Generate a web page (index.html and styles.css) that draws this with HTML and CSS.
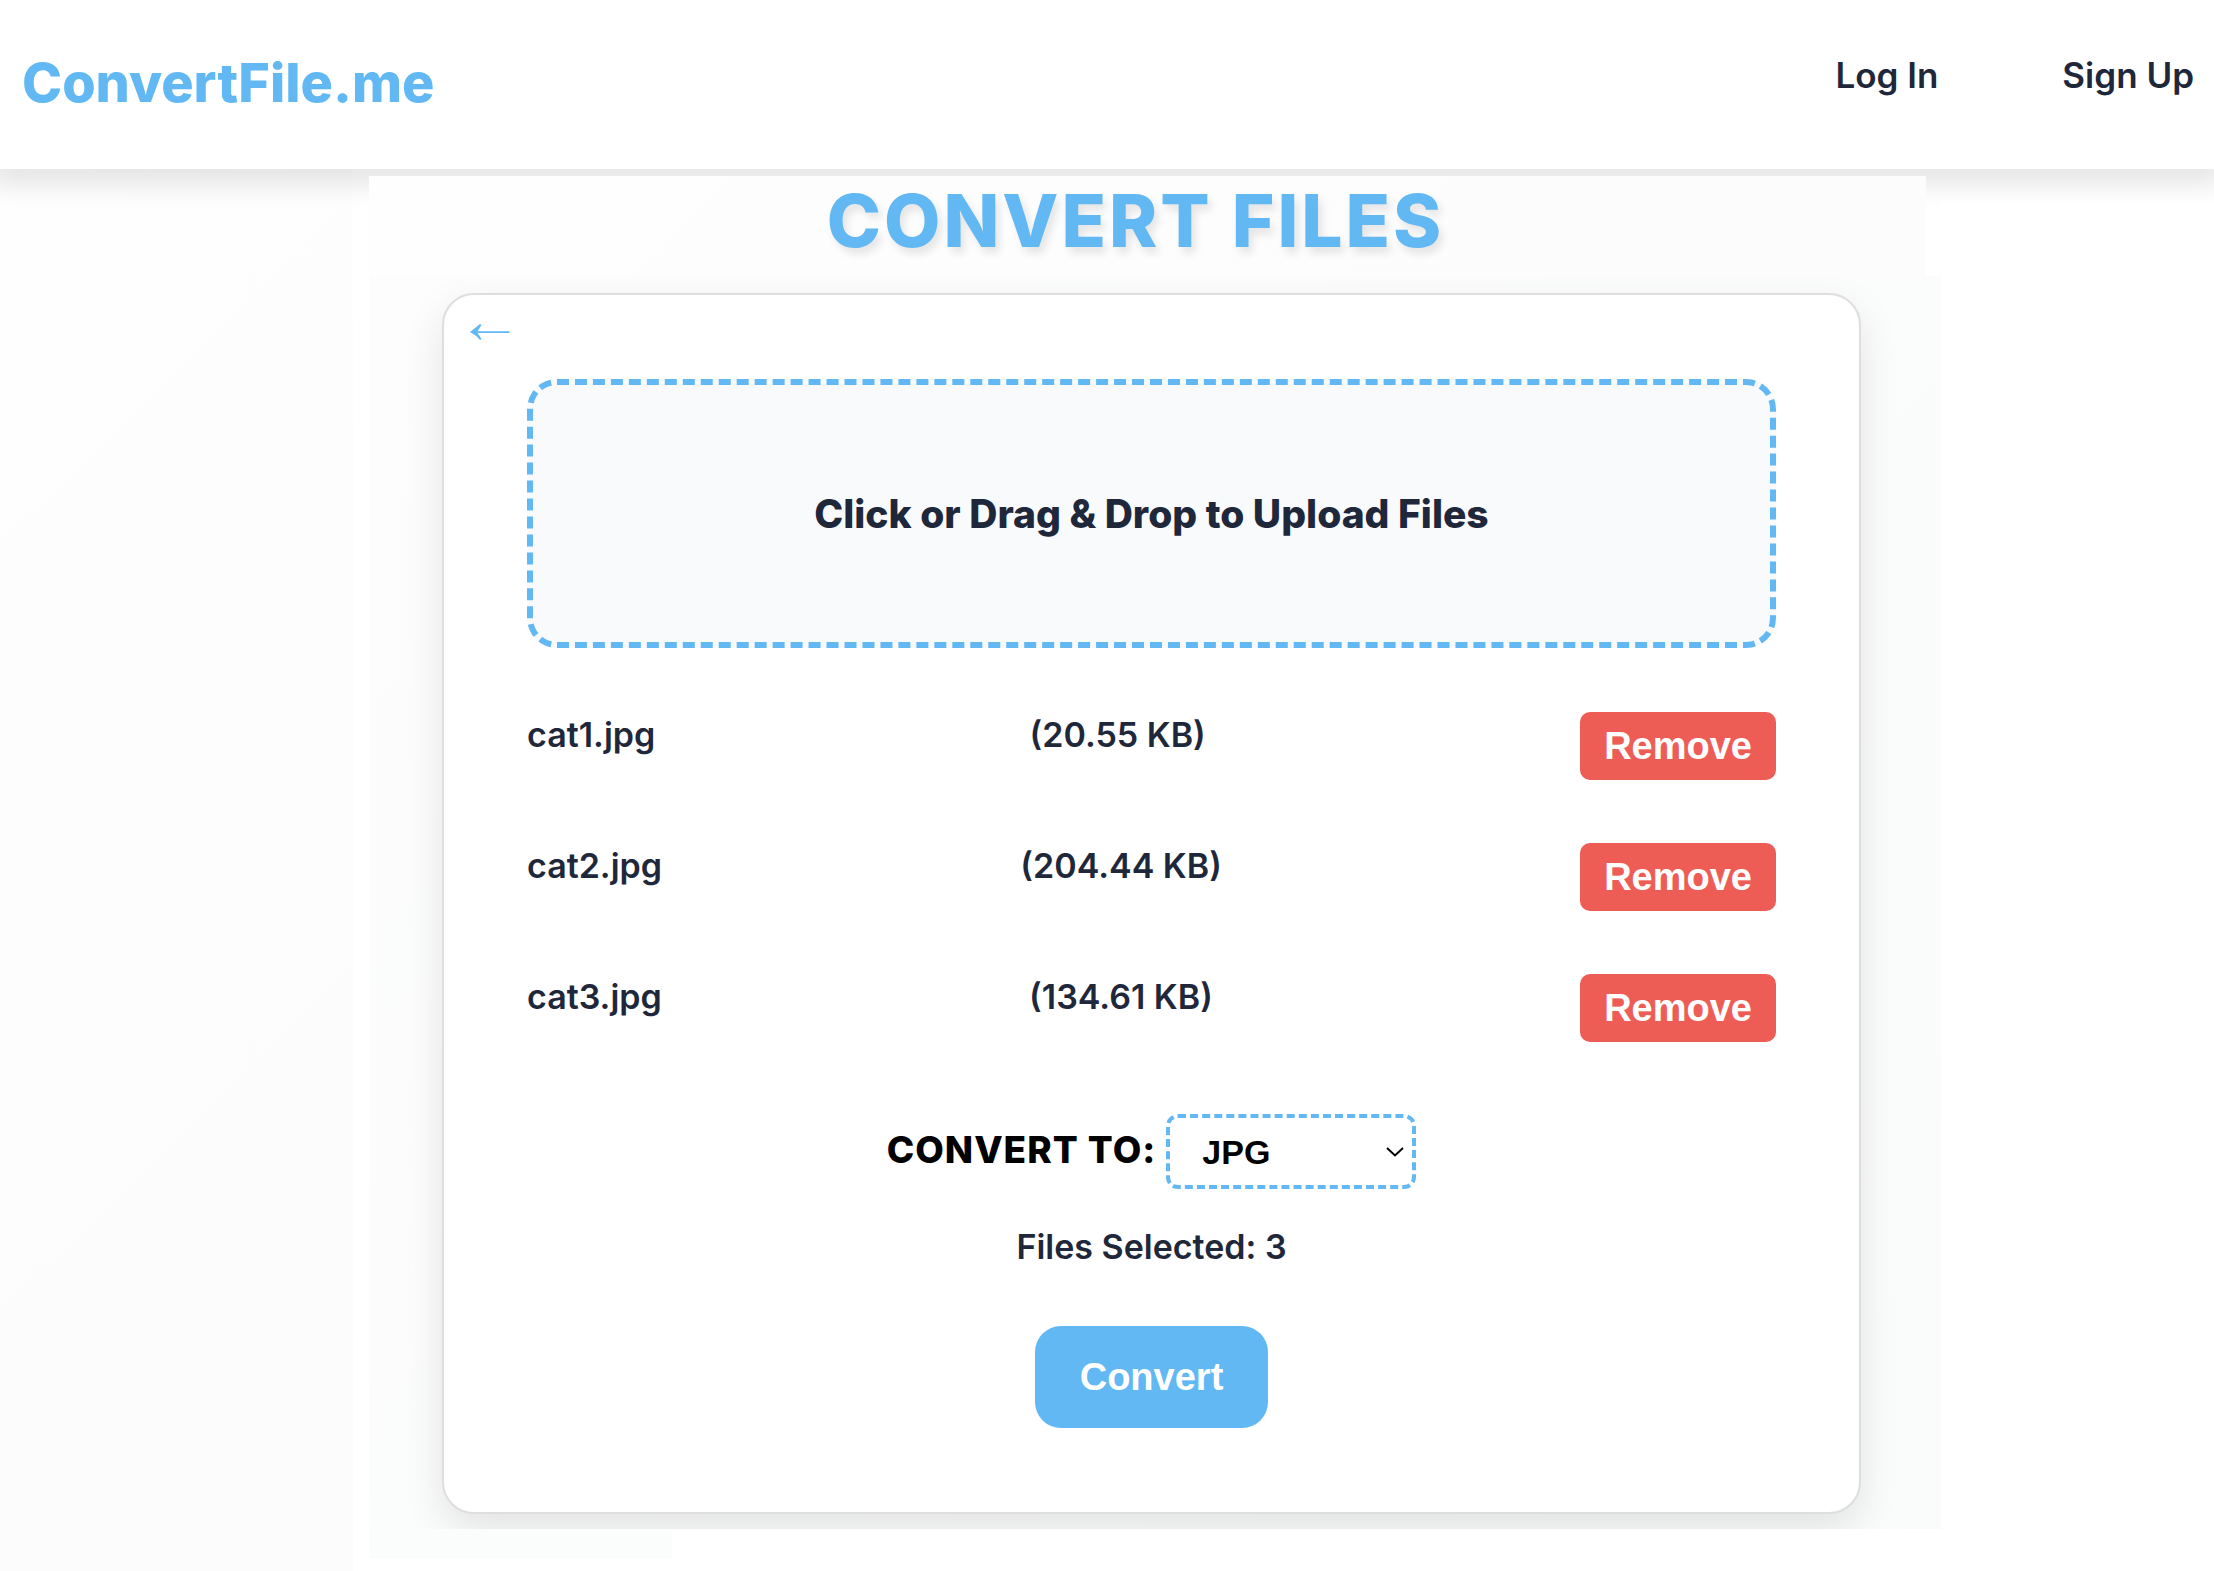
FILE: index.html
```html
<!DOCTYPE html>
<html lang="en">
<head>
  <meta charset="utf-8">
  <meta name="viewport" content="width=device-width, initial-scale=1">
  <title>ConvertFile.me</title>
  <link rel="stylesheet" href="styles.css">
</head>
<body>
  <header class="site-header">
    <a class="logo" href="#">ConvertFile.me</a>
    <nav class="nav">
      <a class="nav-link" href="#">Log In</a>
      <a class="nav-link" href="#">Sign Up</a>
    </nav>
  </header>
  <div class="layout">
    <div class="side side-left"></div>
    <main class="panel">
      <h1 class="title">CONVERT FILES</h1>
      <div class="stage">
        <form class="card">
          <a class="back" href="#" aria-label="Back">
            <svg width="40" height="18" viewBox="0 0 40 18" aria-hidden="true">
              <path d="M0 9 L10 1 L11.500 2 Q9 6 7.500 8.200 H39.500 V10 H7.500 Q9 12 11.500 16 L10 17 Q6 12 0 9 Z" fill="currentColor"/>
            </svg>
          </a>
          <label class="dropzone">
            <input class="file-input" type="file" multiple>
            <span>Click or Drag &amp; Drop to Upload Files</span>
          </label>
          <ul class="files">
            <li class="file"><span>cat1.jpg</span><span>(20.55 KB)</span><button class="remove" type="button">Remove</button></li>
            <li class="file"><span>cat2.jpg</span><span>(204.44 KB)</span><button class="remove" type="button">Remove</button></li>
            <li class="file"><span>cat3.jpg</span><span>(134.61 KB)</span><button class="remove" type="button">Remove</button></li>
          </ul>
          <div class="format">
            <label class="format-label" for="format">CONVERT TO:</label>
            <div class="select-wrap">
              <select class="select" id="format">
                <option>JPG</option>
                <option>PNG</option>
                <option>WEBP</option>
              </select>
              <svg class="chevron" width="18" height="10" viewBox="0 0 18 10" aria-hidden="true">
                <path d="M1 1 L9 8.500 L17 1" fill="none" stroke="#000" stroke-width="2"/>
              </svg>
            </div>
          </div>
          <p class="count">Files Selected: 3</p>
          <button class="convert" type="submit">Convert</button>
        </form>
      </div>
      <div class="panel-foot"></div>
    </main>
    <div class="side side-right"></div>
  </div>
</body>
</html>
```

FILE: styles.css
```css
:root {
  --blue: #62b8f3;
  --ink: #1f283b;
  --red: #ee5c56;
}

* {
  box-sizing: border-box;
}

body {
  margin: 0;
  min-height: 100vh;
  display: flex;
  flex-direction: column;
  background: #fff;
  color: var(--ink);
  font-family: Inter, sans-serif;
}

a {
  text-decoration: none;
}

.site-header {
  position: relative;
  z-index: 1;
  display: flex;
  justify-content: space-between;
  padding: 46px 20px 50px 22px;
  background: #fff;
  box-shadow: 0 8px 24px 8px rgba(0, 0, 0, 0.1);
}

.logo {
  color: var(--blue);
  font-size: 54px;
  font-weight: 800;
  line-height: 73px;
}

.nav {
  display: flex;
  gap: 124px;
}

.nav-link {
  color: var(--ink);
  font-size: 35px;
  font-weight: 600;
  line-height: 58px;
}

.layout {
  flex: 1;
  display: grid;
  grid-template-columns: 353fr 1588fr 273fr;
}

.side-left {
  background: linear-gradient(135deg, #fefefe, #fcfcfc);
}

.side-right {
  position: relative;
  z-index: 2;
  margin-top: 32px;
  background: #fff;
}

.panel {
  position: relative;
  z-index: 2;
  margin: 7px 0 0 16px;
}

.title {
  margin: 0 15px 0 0;
  padding-right: 24px;
  background: linear-gradient(135deg, #fefefe, #fcfcfc);
  color: var(--blue);
  font-size: 73px;
  font-weight: 800;
  line-height: 90px;
  height: 100px;
  letter-spacing: 3px;
  text-align: center;
  text-shadow: 4px 6px 8px rgba(0, 0, 0, 0.1);
}

.stage {
  overflow: hidden;
  padding: 17px 80px 15px 73px;
  background: linear-gradient(135deg, #fdfdfd, #fafbfb);
}

.card {
  position: relative;
  display: flex;
  flex-direction: column;
  align-items: center;
  padding: 84px 83px;
  border: 2px solid #dedede;
  border-radius: 32px;
  background: #fff;
  box-shadow: 0 16px 40px rgba(0, 0, 0, 0.1);
}

.back {
  position: absolute;
  top: 28px;
  left: 26px;
  color: var(--blue);
}

.back svg {
  display: block;
}

.dropzone {
  align-self: stretch;
  display: flex;
  align-items: center;
  justify-content: center;
  height: 269px;
  border: 6px dashed var(--blue);
  border-radius: 30px;
  background: #f9fafc;
  font-size: 39px;
  font-weight: 800;
}

.file-input {
  position: absolute;
  width: 1px;
  height: 1px;
  opacity: 0;
}

.files {
  align-self: stretch;
  margin: 64px 0 72px;
  padding: 0;
  list-style: none;
  display: grid;
  gap: 63px;
}

.file {
  display: flex;
  justify-content: space-between;
  font-size: 34px;
  font-weight: 600;
  line-height: 46px;
}

.remove,
.convert {
  border: 0;
  color: #fff;
  font-family: "Liberation Sans", Arial, sans-serif;
  font-size: 38px;
  font-weight: 700;
}

.remove {
  height: 68px;
  padding: 0 24px;
  border-radius: 10px;
  background: var(--red);
}

.format {
  display: flex;
  align-items: center;
  gap: 10px;
}

.format-label {
  padding-bottom: 4px;
  color: #000;
  font-size: 37px;
  font-weight: 800;
  letter-spacing: 1px;
}

.select-wrap {
  position: relative;
}

.select {
  appearance: none;
  display: block;
  width: 250px;
  height: 75px;
  padding: 0 32px;
  border: 4px dashed var(--blue);
  border-radius: 12px;
  background: #fff;
  color: #000;
  font-family: "Liberation Sans", Arial, sans-serif;
  font-size: 34px;
  font-weight: 700;
}

.chevron {
  position: absolute;
  top: 33px;
  right: 12px;
  pointer-events: none;
}

.count {
  margin: 34px 0 55px;
  font-size: 34px;
  font-weight: 600;
  line-height: 48px;
}

.convert {
  height: 102px;
  padding: 0 45px;
  border-radius: 26px;
  background: var(--blue);
}

.panel-foot {
  width: 303px;
  height: 30px;
  background: #fbfcfc;
}
```
